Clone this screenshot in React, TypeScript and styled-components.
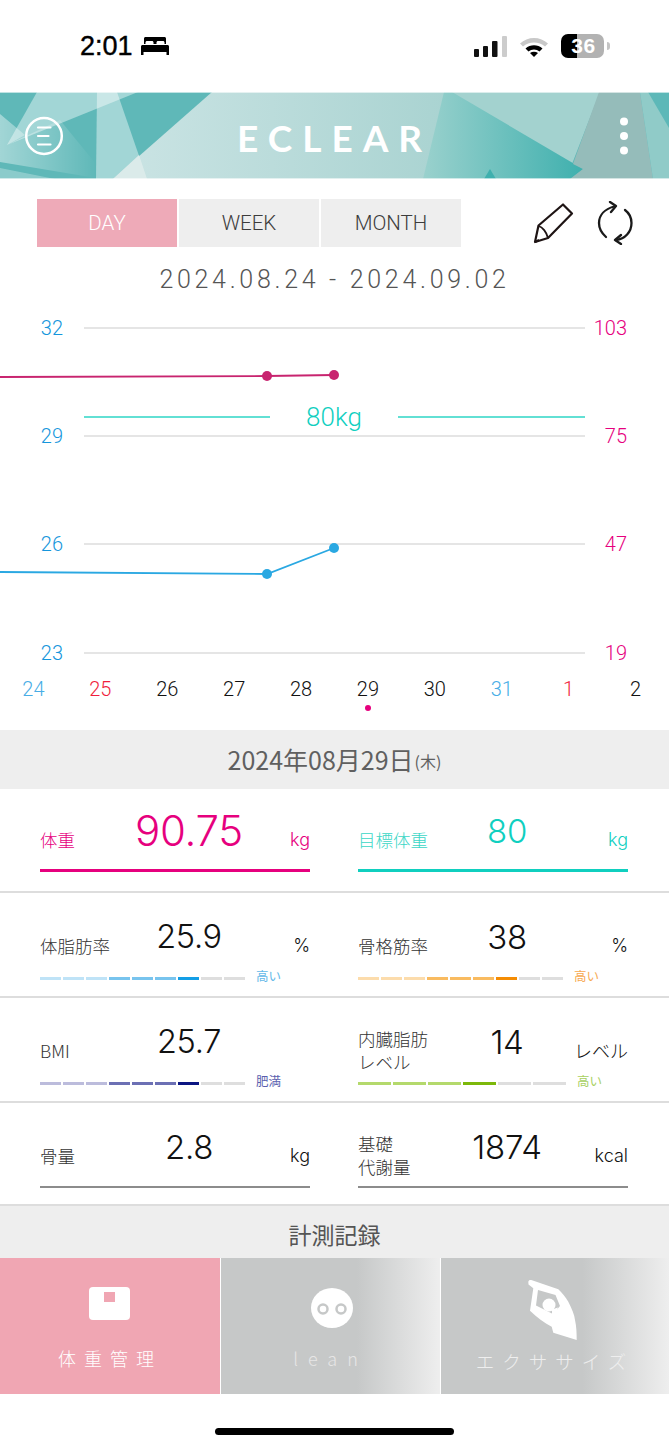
import React from "react";
import styled, { createGlobalStyle } from "styled-components";

const SANS = `"Inter", "Liberation Sans", "Noto Sans CJK JP", sans-serif`;
const THIN = `"Roboto", "Liberation Sans", "Noto Sans CJK JP", sans-serif`;
const JP = `"Noto Sans CJK JP", "Liberation Sans", sans-serif`;

const Global = createGlobalStyle`
  html, body { margin: 0; padding: 0; background: #fff; }
  * { box-sizing: border-box; }
`;

const Page = styled.div`
  width: 669px;
  height: 1448px;
  overflow: hidden;
  background: #fff;
  font-family: ${SANS};
  display: flex;
  flex-direction: column;
`;

/* status bar */
const StatusBar = styled.div`
  height: 92px;
  flex: none;
  display: flex;
  align-items: center;
  padding: 0 59px 0 80px;
`;
const Clock = styled.span`
  font-family: "Liberation Sans", sans-serif;
  font-size: 27px;
  font-weight: 400;
  color: #000;
  -webkit-text-stroke: 0.4px #000;
  margin-right: 8px;
`;
const StatusRight = styled.div`
  margin-left: auto;
  display: flex;
  align-items: center;
  gap: 12px;
`;
const Battery = styled.div`
  width: 43px;
  height: 24px;
  border-radius: 7px;
  background: linear-gradient(90deg, #000 0 37%, #b2b2b2 37% 100%);
  color: #fff;
  font-family: "Liberation Sans", sans-serif;
  font-weight: 700;
  font-size: 21px;
  line-height: 24px;
  text-align: center;
  letter-spacing: 0.5px;
  padding-left: 2px;
`;
const BatteryTip = styled.div`
  width: 3px;
  height: 8px;
  margin-left: -9px;
  border-radius: 0 3px 3px 0;
  background: #c4c4c4;
`;

/* banner */
const Banner = styled.header`
  position: relative;
  height: 87px;
  flex: none;
  display: flex;
  align-items: center;
  justify-content: space-between;
  padding: 0 40px 0 24px;
  overflow: hidden;
`;
const BannerArt = styled.svg`
  position: absolute;
  inset: 0;
`;
const BannerIcon = styled.svg`
  position: relative;
`;
const Logo = styled.div`
  position: absolute;
  left: 237px;
  top: 24px;
  font-family: "Lato", sans-serif;
  font-weight: 700;
  font-size: 37px;
  line-height: 44px;
  letter-spacing: 10px;
  color: #fff;
`;

/* toolbar */
const Toolbar = styled.div`
  flex: none;
  margin-top: 20px;
  padding: 0 36px 0 37px;
  display: flex;
  align-items: center;
  height: 48px;
`;
const Tabs = styled.div`
  display: flex;
  gap: 2px;
`;
const Tab = styled.div<{ $active?: boolean }>`
  width: 140px;
  height: 48px;
  display: flex;
  align-items: center;
  justify-content: center;
  font-family: ${THIN};
  font-weight: 300;
  font-size: 20.5px;
  color: ${(p) => (p.$active ? "#fff" : "#3c3c3c")};
  background: ${(p) => (p.$active ? "#eeaab8" : "#eeeeee")};
`;
const ToolIcons = styled.div`
  margin-left: auto;
  display: flex;
  align-items: center;
  gap: 22px;
`;
const DateRange = styled.div`
  flex: none;
  height: 46px;
  margin-top: 9px;
  display: flex;
  align-items: center;
  justify-content: center;
  font-family: ${THIN};
  font-weight: 300;
  font-size: 25px;
  letter-spacing: 3.7px;
  color: #555;
`;

/* chart */
const ChartSvg = styled.svg`
  flex: none;
  display: block;
  margin-top: 8px;
  font-family: ${THIN};
  font-weight: 300;
`;
const AxisRow = styled.div`
  flex: none;
  height: 60px;
  display: grid;
  grid-template-columns: repeat(10, 1fr);
`;
const Day = styled.div<{ $color: string }>`
  display: flex;
  flex-direction: column;
  align-items: center;
  padding-top: 6px;
  font-family: ${THIN};
  font-weight: 300;
  font-size: 20px;
  line-height: 26px;
  color: ${(p) => p.$color};
`;
const DayDot = styled.span`
  width: 6px;
  height: 6px;
  margin-top: 3px;
  border-radius: 50%;
  background: #e6007e;
`;

const DateBand = styled.div`
  flex: none;
  height: 59px;
  background: #eeeeee;
  display: flex;
  align-items: center;
  justify-content: center;
  font-family: ${JP};
  font-weight: 400;
  font-size: 25px;
  color: #606060;
  padding-bottom: 2px;
`;
const Weekday = styled.span`
  font-size: 16px;
  font-weight: 400;
  margin-top: 5px;
  margin-left: 1px;
`;

/* metrics */
const Row = styled.div<{ $top?: number; $h: number }>`
  flex: none;
  height: ${(p) => p.$h}px;
  padding: ${(p) => p.$top ?? 22}px 41px 0 40px;
  border-bottom: 2px solid #dddddd;
  display: grid;
  grid-template-columns: 270px 270px;
  column-gap: 48px;
  align-items: start;
`;
const Top = styled.div`
  height: 60px;
  display: grid;
  grid-template-columns: 100px 98px 72px;
  align-items: center;
`;
const Label = styled.div<{ $color?: string }>`
  font-family: ${JP};
  font-weight: 300;
  font-size: 17.5px;
  line-height: 23px;
  color: ${(p) => p.$color ?? "#333"};
  white-space: nowrap;
`;
const Value = styled.div<{ $size: number; $color?: string }>`
  font-family: ${SANS};
  font-weight: 300;
  font-size: ${(p) => p.$size}px;
  line-height: 44px;
  padding-bottom: 16px;
  display: flex;
  justify-content: center;
  white-space: nowrap;
  letter-spacing: -0.3px;
  color: ${(p) => p.$color ?? "#111"};
`;
const Unit = styled.div<{ $color?: string }>`
  font-family: ${SANS};
  font-weight: 300;
  font-size: 18px;
  text-align: right;
  white-space: nowrap;
  color: ${(p) => p.$color ?? "#111"};
`;
const Rule = styled.div<{ $color: string; $h: number; $mt?: number }>`
  height: ${(p) => p.$h}px;
  margin-top: ${(p) => p.$mt ?? 0}px;
  background: ${(p) => p.$color};
`;
const Meter = styled.div`
  display: flex;
  align-items: center;
  height: 3px;
  margin-top: 2px;
`;
const Segs = styled.div<{ $w: number }>`
  width: ${(p) => p.$w}px;
  flex: none;
  display: flex;
  gap: 1.5px;
`;
const Seg = styled.span<{ $color: string }>`
  flex: 1;
  height: 3px;
  background: ${(p) => p.$color};
`;
const Level = styled.span<{ $color: string }>`
  margin-left: 11px;
  margin-top: -6px;
  font-family: ${JP};
  font-weight: 400;
  font-size: 12.5px;
  line-height: 14px;
  white-space: nowrap;
  color: ${(p) => p.$color};
`;

const RecordBand = styled.div`
  flex: none;
  height: 52px;
  background: #eeeeee;
  display: flex;
  align-items: center;
  justify-content: center;
  font-family: ${JP};
  font-weight: 400;
  font-size: 23px;
  color: #555;
  padding-top: 4px;
`;

/* nav */
const Nav = styled.nav`
  flex: none;
  height: 136px;
  display: grid;
  grid-template-columns: 220px 219px 228px;
  column-gap: 1px;
`;
const NavItem = styled.div<{ $active?: boolean }>`
  display: flex;
  flex-direction: column;
  align-items: center;
  padding-top: 17px;
  background: ${(p) =>
    p.$active ? "#f0a6b3" : "linear-gradient(90deg, #c6c8c8 0 62%, #eeeeee 100%)"};
`;
const NavLabel = styled.span<{ $drop?: number; $color?: string; $spacing: number; $size?: number }>`
  margin-top: ${(p) => p.$drop ?? 0}px;
  font-family: ${JP};
  font-weight: 300;
  font-size: ${(p) => p.$size ?? 18}px;
  line-height: 26px;
  letter-spacing: ${(p) => p.$spacing}px;
  color: ${(p) => p.$color ?? "#fff"};
  white-space: nowrap;
`;
const HomeBar = styled.div`
  flex: none;
  width: 239px;
  height: 7px;
  margin: 34px auto 0;
  background: #000;
  border-radius: 4px;
`;

const tone = (light: string, mid: string, strong: string, on: [number, number], total: number) =>
  Array.from({ length: total }, (_, i) =>
    i < on[0] ? light : i < on[1] - 1 ? mid : i === on[1] - 1 ? strong : "#dedede"
  );

const MeterBar = ({ w, colors, text, color }: { w: number; colors: string[]; text: string; color: string }) => (
  <Meter>
    <Segs $w={w}>
      {colors.map((c, i) => (
        <Seg key={i} $color={c} />
      ))}
    </Segs>
    <Level $color={color}>{text}</Level>
  </Meter>
);

const gridY = [
  [328, "32", "103"],
  [436, "29", "75"],
  [544, "26", "47"],
  [653, "23", "19"],
] as const;

const days: [string, string][] = [
  ["24", "#48ade6"],
  ["25", "#f01e3c"],
  ["26", "#111"],
  ["27", "#111"],
  ["28", "#111"],
  ["29", "#111"],
  ["30", "#111"],
  ["31", "#48ade6"],
  ["1", "#f01e3c"],
  ["2", "#111"],
];

export default function App() {
  return (
    <Page>
      <Global />
      <StatusBar>
        <Clock>2:01</Clock>
        <svg width="28" height="18" viewBox="0 0 28 18">
          <path d="M3 1.500C3 .7 3.700 0 4.500 0h19C24.300 0 25 .7 25 1.500V7h-1.500V5.500c0-.8-.7-1.500-1.500-1.500h-5c-.8 0-1.500.7-1.500 1.500V7h-3V5.500C12.500 4.700 11.800 4 11 4H6c-.8 0-1.500.7-1.500 1.500V7H3z" fill="#000" />
          <path d="M1.500 8h25c.8 0 1.500.7 1.500 1.500V18h-2.500v-3h-23v3H0V9.500C0 8.700.7 8 1.500 8z" fill="#000" />
        </svg>
        <StatusRight>
          <svg width="33" height="21" viewBox="0 0 33 21">
            <rect x="0" y="13" width="5" height="8" rx="1" fill="#111" />
            <rect x="9" y="10" width="5" height="11" rx="1" fill="#111" />
            <rect x="18" y="5" width="5.500" height="16" rx="1" fill="#111" />
            <rect x="28" y="0" width="5" height="21" rx="1" fill="#cccccc" />
          </svg>
          <svg width="30" height="21" viewBox="0 0 30 21">
            <path d="M1 7.500C8.500 0 21.500 0 29 7.500l-3 3C20 5 10 5 4 10.500z" fill="#c8c8c8" />
            <path d="M6.500 12.500c4.800-4.400 12.200-4.400 17 0l-3 3c-3.200-2.800-7.800-2.800-11 0z" fill="#000" />
            <path d="M11 17c2.400-1.800 5.600-1.800 8 0l-4 4z" fill="#000" />
          </svg>
          <Battery>36</Battery>
          <BatteryTip />
        </StatusRight>
      </StatusBar>

      <Banner>
        <BannerArt width="669" height="87" viewBox="0 0 669 87">
          <defs>
            <linearGradient id="lightBand" x1="0" x2="1" y1="0" y2="0">
              <stop offset="0" stopColor="#cbe4e4" />
              <stop offset="1" stopColor="#a9d3d1" />
            </linearGradient>
            <linearGradient id="tealWedge" x1="0" x2="1" y1="0" y2="0">
              <stop offset="0" stopColor="#9ad1cd" />
              <stop offset="1" stopColor="#3fb0ae" />
            </linearGradient>
            <linearGradient id="leftFade" x1="0" x2="1" y1="0" y2="0">
              <stop offset="0" stopColor="#fff" stopOpacity="0.42" />
              <stop offset="1" stopColor="#fff" stopOpacity="0" />
            </linearGradient>
          </defs>
          <rect width="669" height="87" fill="#5fb8b8" />
          <polygon points="0,22 25,43 7,53 60,28 96,72 96,86 0,70" fill="url(#leftFade)" />
          <polygon points="0,76 55,87 0,87" fill="#fff" fillOpacity="0.28" />
          <polygon points="37,0 138,0 7,53" fill="#fff" fillOpacity="0.42" />
          <polygon points="97,0 117,0 147,87 96,87" fill="#fff" fillOpacity="0.42" />
          <polygon points="212,0 450,0 425,87 113,87" fill="url(#lightBand)" />
          <polygon points="113,87 139,63 147,87" fill="#dbebea" />
          <polygon points="444,0 600,0 572,72 450,0" fill="#a3d2cf" />
          <polygon points="444,0 452,0 583,77 570,87 423,87" fill="url(#tealWedge)" />
          <polygon points="484,87 490,77 496,87" fill="#3fb0ae" />
          <polygon points="599,0 640,0 653,87 570,87 583,77 573,72" fill="#95bcba" />
          <polygon points="640,0 669,0 669,87 653,87" fill="#90cbc8" />
          <polygon points="648,0 669,0 669,36" fill="#5db8b8" />
          <rect width="669" height="1" fill="#fff" fillOpacity="0.6" />
          <rect y="86" width="669" height="1" fill="#fff" fillOpacity="0.6" />
        </BannerArt>
        <BannerIcon width="40" height="40" viewBox="0 0 40 40">
          <ellipse cx="20" cy="20" rx="17.800" ry="18" fill="none" stroke="#fff" strokeWidth="2.500" />
          <path d="M14 11.500h12.500M14 20h10.500M14 28.500h12.500" stroke="#fff" strokeWidth="2.200" strokeLinecap="round" />
        </BannerIcon>
        <Logo>ECLEAR</Logo>
        <BannerIcon width="10" height="40" viewBox="0 0 10 40">
          <circle cx="5" cy="5.500" r="4" fill="#fff" />
          <circle cx="5" cy="20" r="4" fill="#fff" />
          <circle cx="5" cy="34.500" r="4" fill="#fff" />
        </BannerIcon>
      </Banner>

      <Toolbar>
        <Tabs>
          <Tab $active>DAY</Tab>
          <Tab>WEEK</Tab>
          <Tab>MONTH</Tab>
        </Tabs>
        <ToolIcons>
          <svg width="42" height="42" viewBox="0 0 42 42" fill="none" stroke="#1e1414" strokeWidth="2.200" strokeLinejoin="round">
            <path d="M2 40L5.500 23.500 30 2.500l9 9L15 36z" />
            <path d="M5.500 24c4 1 8 6 9.500 12" strokeWidth="1.800" />
            <path d="M2 40l4-2" />
          </svg>
          <svg width="36" height="44" viewBox="0 0 36 44" fill="none" stroke="#1a1a1a" strokeWidth="2.300" strokeLinecap="round" strokeLinejoin="round">
            <path d="M17 5.500C8 8 2 14 2 22c0 5.500 2.500 10 7 14" />
            <path d="M13 1l6 4-5 6" />
            <path d="M28 9c4 3 6.500 8 6.500 13 0 9-6.500 16-15.500 17" />
            <path d="M24 34l-6 5 6 4" />
          </svg>
        </ToolIcons>
      </Toolbar>

      <DateRange>2024.08.24 - 2024.09.02</DateRange>

      <ChartSvg width="669" height="360" viewBox="0 310 669 360">
        {gridY.map(([y, l, r]) => (
          <g key={y}>
            <line x1="84" x2="585" y1={y} y2={y} stroke="#dcdcdc" strokeWidth="1.600" />
            <text x="63" y={y + 7} textAnchor="end" fontSize="20" fill="#1596dc">{l}</text>
            <text x="627" y={y + 7} textAnchor="end" fontSize="20" fill="#e6007e">{r}</text>
          </g>
        ))}
        <path d="M84 417H270M398 417H585" stroke="#2fd6c6" strokeWidth="1.600" />
        <text x="334" y="426" textAnchor="middle" fontSize="26" fill="#10cfbf">80kg</text>
        <polyline points="0,377 267,376 334,375" fill="none" stroke="#c8246f" strokeWidth="1.800" />
        <circle cx="267" cy="376" r="5" fill="#c8246f" />
        <circle cx="334" cy="375" r="5" fill="#c8246f" />
        <polyline points="0,572 267,574 334,548" fill="none" stroke="#2aa8e2" strokeWidth="1.800" />
        <circle cx="267" cy="574" r="5" fill="#2aa8e2" />
        <circle cx="334" cy="548" r="5" fill="#2aa8e2" />
      </ChartSvg>

      <AxisRow>
        {days.map(([d, c], i) => (
          <Day key={d} $color={c}>
            {d}
            {i === 5 && <DayDot />}
          </Day>
        ))}
      </AxisRow>

      <DateBand>
        2024年08月29日<Weekday>(木)</Weekday>
      </DateBand>

      <Row $top={20} $h={104}>
        <div>
          <Top>
            <Label $color="#e6007e">体重</Label>
            <Value $size={42} $color="#e6007e">90.75</Value>
            <Unit $color="#e6007e">kg</Unit>
          </Top>
          <Rule $color="#e6007e" $h={3} />
        </div>
        <div>
          <Top>
            <Label $color="#3ad6c6">目標体重</Label>
            <Value $size={33} $color="#10cfbf">80</Value>
            <Unit $color="#10cfbf">kg</Unit>
          </Top>
          <Rule $color="#10cfbf" $h={3} />
        </div>
      </Row>

      <Row $h={105}>
        <div>
          <Top>
            <Label>体脂肪率</Label>
            <Value $size={32.500}>25.9</Value>
            <Unit>%</Unit>
          </Top>
          <MeterBar w={205} colors={tone("#bfe3f7", "#78c4ee", "#139ee6", [3, 7], 9)} text="高い" color="#62b8e8" />
        </div>
        <div>
          <Top>
            <Label>骨格筋率</Label>
            <Value $size={33}>38</Value>
            <Unit>%</Unit>
          </Top>
          <MeterBar w={205} colors={tone("#fcdcac", "#f9bb60", "#f48c04", [3, 7], 9)} text="高い" color="#f7a94e" />
        </div>
      </Row>

      <Row $h={105}>
        <div>
          <Top>
            <Label>BMI</Label>
            <Value $size={32.500}>25.7</Value>
            <Unit />
          </Top>
          <MeterBar w={205} colors={tone("#bcbcdc", "#6c70b4", "#0c1682", [3, 7], 9)} text="肥満" color="#5a5eae" />
        </div>
        <div>
          <Top>
            <Label>
              内臓脂肪
              <br />
              レベル
            </Label>
            <Value $size={33}>14</Value>
            <Unit>レベル</Unit>
          </Top>
          <MeterBar w={208} colors={tone("#b4d96c", "#b4d96c", "#7cb80a", [3, 4], 6)} text="高い" color="#a8d060" />
        </div>
      </Row>

      <Row $h={103}>
        <div>
          <Top>
            <Label>骨量</Label>
            <Value $size={33}>2.8</Value>
            <Unit>kg</Unit>
          </Top>
          <Rule $color="#8c8c8c" $h={2} $mt={1} />
        </div>
        <div>
          <Top>
            <Label>
              基礎
              <br />
              代謝量
            </Label>
            <Value $size={33}>1874</Value>
            <Unit>kcal</Unit>
          </Top>
          <Rule $color="#8c8c8c" $h={2} $mt={1} />
        </div>
      </Row>

      <RecordBand>計測記録</RecordBand>

      <Nav>
        <NavItem $active>
          <svg width="60" height="70" viewBox="0 0 60 70">
            <rect x="9" y="12" width="41" height="33" rx="4" fill="#fff" />
            <rect x="24" y="17" width="11" height="10" fill="#f0a6b3" />
          </svg>
          <NavLabel $spacing={8}>体重管理</NavLabel>
        </NavItem>
        <NavItem>
          <svg width="60" height="70" viewBox="0 0 60 70">
            <ellipse cx="31" cy="33" rx="21" ry="20" fill="#fff" />
            <circle cx="22" cy="34" r="4.500" fill="none" stroke="#c6c8c8" strokeWidth="2.500" />
            <circle cx="40" cy="34" r="4.500" fill="none" stroke="#c6c8c8" strokeWidth="2.500" />
          </svg>
          <NavLabel $spacing={10} $color="#e6e6e6">lean</NavLabel>
        </NavItem>
        <NavItem>
          <svg width="90" height="70" viewBox="0 0 90 70">
            <path
              fillRule="evenodd"
              fill="#fff"
              d="M18.300 6.700C18.800 5 20 4.600 22 5.200L48.300 14.300C52 18 55.500 22 58.300 26.700 62 34 64.500 40 65 45 66.500 52 66.700 58 66.700 65L43.300 57.700 41.700 51.700C34 47.500 27 42.500 20 35.700L23.300 13.300 18.500 9.500zM28 15L26 30.500 43 39 50 31 45.500 20z"
            />
            <circle cx="39" cy="30" r="6.500" fill="#fff" />
            <path d="M42 34.500l6 -2 -2 6 -4 2z" fill="#fff" />
          </svg>
          <NavLabel $spacing={8} $size={18.500} $drop={3} $color="#eeeeee">エクササイズ</NavLabel>
        </NavItem>
      </Nav>

      <HomeBar />
    </Page>
  );
}
